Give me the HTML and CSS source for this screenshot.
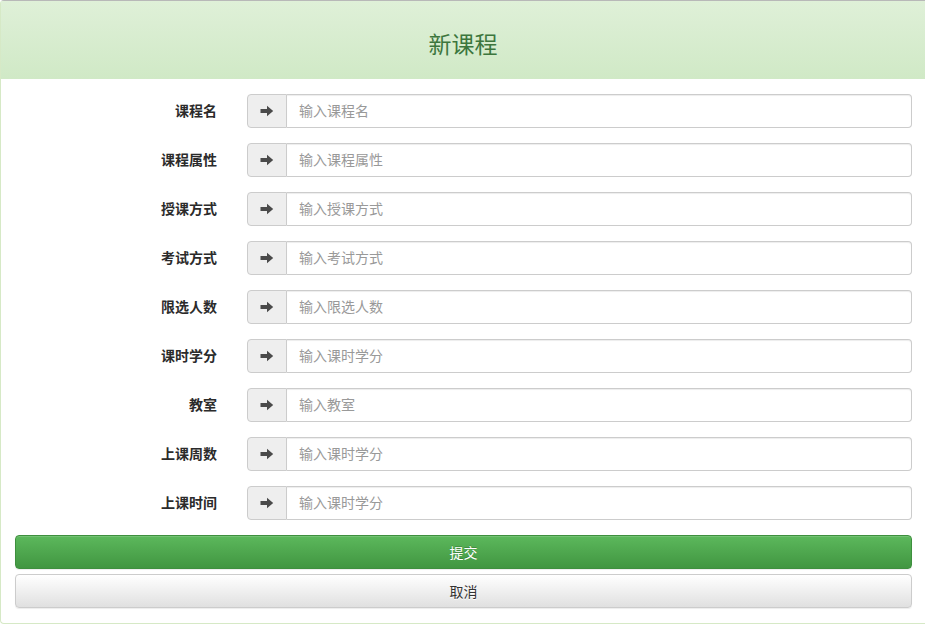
FILE: index.html
```
<!DOCTYPE html>
<html lang="zh">
<head>
<meta charset="utf-8">
<title>新课程</title>
<link rel="stylesheet" href="styles.css">
</head>
<body>
<div class="panel">
  <div class="panel-heading"><h3 class="panel-title">新课程</h3></div>
  <div class="panel-body">
    <form class="form">
      <div class="row"><label class="label">课程名</label><div class="group"><span class="addon"><svg class="arrow" viewBox="0 0 14 14"><path d="M0.5 5h6.5V1.8L13.2 7 7 12.2V9H0.5z"/></svg></span><input class="input" placeholder="输入课程名"></div></div>
      <div class="row"><label class="label">课程属性</label><div class="group"><span class="addon"><svg class="arrow" viewBox="0 0 14 14"><path d="M0.5 5h6.5V1.8L13.2 7 7 12.2V9H0.5z"/></svg></span><input class="input" placeholder="输入课程属性"></div></div>
      <div class="row"><label class="label">授课方式</label><div class="group"><span class="addon"><svg class="arrow" viewBox="0 0 14 14"><path d="M0.5 5h6.5V1.8L13.2 7 7 12.2V9H0.5z"/></svg></span><input class="input" placeholder="输入授课方式"></div></div>
      <div class="row"><label class="label">考试方式</label><div class="group"><span class="addon"><svg class="arrow" viewBox="0 0 14 14"><path d="M0.5 5h6.5V1.8L13.2 7 7 12.2V9H0.5z"/></svg></span><input class="input" placeholder="输入考试方式"></div></div>
      <div class="row"><label class="label">限选人数</label><div class="group"><span class="addon"><svg class="arrow" viewBox="0 0 14 14"><path d="M0.5 5h6.5V1.8L13.2 7 7 12.2V9H0.5z"/></svg></span><input class="input" placeholder="输入限选人数"></div></div>
      <div class="row"><label class="label">课时学分</label><div class="group"><span class="addon"><svg class="arrow" viewBox="0 0 14 14"><path d="M0.5 5h6.5V1.8L13.2 7 7 12.2V9H0.5z"/></svg></span><input class="input" placeholder="输入课时学分"></div></div>
      <div class="row"><label class="label">教室</label><div class="group"><span class="addon"><svg class="arrow" viewBox="0 0 14 14"><path d="M0.5 5h6.5V1.8L13.2 7 7 12.2V9H0.5z"/></svg></span><input class="input" placeholder="输入教室"></div></div>
      <div class="row"><label class="label">上课周数</label><div class="group"><span class="addon"><svg class="arrow" viewBox="0 0 14 14"><path d="M0.5 5h6.5V1.8L13.2 7 7 12.2V9H0.5z"/></svg></span><input class="input" placeholder="输入课时学分"></div></div>
      <div class="row"><label class="label">上课时间</label><div class="group"><span class="addon"><svg class="arrow" viewBox="0 0 14 14"><path d="M0.5 5h6.5V1.8L13.2 7 7 12.2V9H0.5z"/></svg></span><input class="input" placeholder="输入课时学分"></div></div>
      <div class="buttons">
        <button type="button" class="btn btn-success">提交</button>
        <button type="button" class="btn btn-default">取消</button>
      </div>
    </form>
  </div>
</div>
</body>
</html>
```
FILE: styles.css
```
html, body {
  margin: 0;
  padding: 0;
  background: #fff;
  overflow: hidden;
}
body {
  font-family: "Liberation Sans", "Noto Sans CJK SC", sans-serif;
  font-size: 14px;
  color: #333;
}
.panel {
  width: 925px;
  box-sizing: border-box;
  border: 1px solid #d6e9c6;
  border-top-color: #b8b8b8;
  border-right: none;
  border-radius: 4px 0 0 4px;
}
.panel-heading {
  height: 78px;
  background: linear-gradient(to bottom, #dff0d8 0%, #d0e9c6 100%);
  display: flex;
  align-items: center;
  justify-content: center;
}
.panel-title {
  margin: 0;
  padding-top: 11px;
  font-size: 23px;
  font-weight: normal;
  color: #3c763d;
  line-height: 1;
}
.panel-body {
  padding: 15px 13px 15px 14px;
}
.form {
  display: flex;
  flex-direction: column;
  gap: 15px;
}
.row {
  display: grid;
  grid-template-columns: 232px 1fr;
  align-items: center;
}
.label {
  text-align: right;
  padding-right: 30px;
  font-weight: bold;
  color: #2b2b2b;
  line-height: 20px;
}
.group {
  display: flex;
  height: 34px;
}
.addon {
  width: 40px;
  box-sizing: border-box;
  background: #eee;
  border: 1px solid #ccc;
  border-radius: 4px 0 0 4px;
  display: flex;
  align-items: center;
  justify-content: center;
}
.arrow {
  width: 14px;
  height: 14px;
  fill: #4a4a4a;
}
.input {
  flex: 1;
  min-width: 0;
  box-sizing: border-box;
  height: 34px;
  border: 1px solid #ccc;
  border-left: none;
  border-radius: 0 4px 4px 0;
  padding: 6px 12px;
  font-family: inherit;
  font-size: 14px;
  color: #555;
  box-shadow: inset 0 1px 1px rgba(0,0,0,.075);
  outline: none;
}
.input::placeholder {
  color: #999;
}
.buttons {
  display: flex;
  flex-direction: column;
  gap: 5px;
}
.btn {
  display: block;
  width: 100%;
  height: 34px;
  box-sizing: border-box;
  border-radius: 4px;
  font-family: inherit;
  font-size: 14px;
  padding: 6px 12px;
  cursor: pointer;
}
.btn-success {
  color: #fff;
  background: linear-gradient(to bottom, #5cb85c 0%, #419641 100%);
  border: 1px solid #3e8f3e;
  text-shadow: 0 -1px 0 rgba(0,0,0,.2);
  box-shadow: inset 0 1px 0 rgba(255,255,255,.15), 0 1px 1px rgba(0,0,0,.075);
}
.btn-default {
  color: #333;
  background: linear-gradient(to bottom, #fff 0%, #e0e0e0 100%);
  border: 1px solid #ccc;
  text-shadow: 0 1px 0 #fff;
  box-shadow: inset 0 1px 0 rgba(255,255,255,.15), 0 1px 1px rgba(0,0,0,.075);
}
```
